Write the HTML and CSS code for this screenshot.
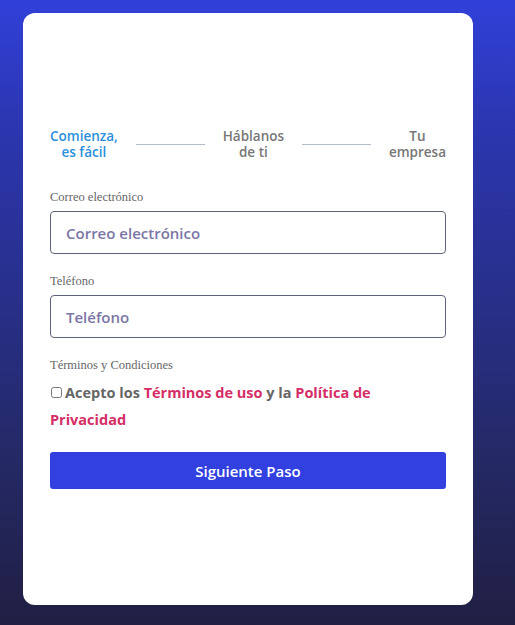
FILE: index.html
```html
<!DOCTYPE html>
<html lang="es">
<head>
    <meta charset="UTF-8">
    <meta name="viewport" content="width=device-width, initial-scale=1.0">
    <title>Registro - Paso 1</title>
    <link rel="stylesheet" href="styles.css">
</head>
<body>
    <form class="card" id="stepForm">
        <div class="steps">
            <div class="step active">Comienza,<br>es fácil</div>
            <div class="step-line"></div>
            <div class="step">Háblanos<br>de ti</div>
            <div class="step-line"></div>
            <div class="step">Tu<br>empresa</div>
        </div>

        <div class="field">
            <label>Correo electrónico</label>
            <input type="email" placeholder="Correo electrónico">
        </div>

        <div class="field">
            <label>Teléfono</label>
            <input type="tel" placeholder="Teléfono">
        </div>

        <div class="field terms">
            <label>Términos y Condiciones</label>
            <p class="terms-text">
                <input type="checkbox" class="check">Acepto los <a href="#">Términos de uso</a> y la <a href="#">Política de</a><br><a href="#">Privacidad</a>
            </p>
        </div>

        <button type="submit" class="next">Siguiente Paso</button>
    </form>
</body>
</html>
```

FILE: styles.css
```css
* {
    margin: 0;
    padding: 0;
    box-sizing: border-box;
}

body {
    height: 625px;
    overflow: hidden;
    background: linear-gradient(180deg, #3140d9 0%, #2b36b0 20%, #252a6a 70%, #201f43 100%);
    font-family: 'Open Sans', 'Noto Sans', sans-serif;
}

.card {
    width: 450px;
    height: 592px;
    margin: 13px 0 0 23px;
    background: #fff;
    border-radius: 12px;
    padding: 115px 27px 0;
}

.steps {
    display: flex;
    align-items: center;
    gap: 18px;
    margin-bottom: 30px;
}

.step {
    font-size: 13.5px;
    font-weight: 600;
    line-height: 16px;
    color: #777;
    text-align: center;
}

.step.active {
    color: #2b8fdc;
}

.step-line {
    flex: 1;
    height: 1px;
    background: #b3bccb;
}

.field {
    margin-bottom: 20px;
}

.field label {
    display: block;
    font-family: 'Liberation Serif', serif;
    font-size: 12.5px;
    color: #666;
    margin-bottom: 6px;
}

.field input[type="email"],
.field input[type="tel"] {
    width: 100%;
    height: 43px;
    border: 1px solid #5d6478;
    border-radius: 4px;
    padding: 0 15px;
    font-family: 'Open Sans', sans-serif;
    font-size: 15px;
    font-weight: 600;
    color: #333;
}

.field input::placeholder {
    color: #7b76a6;
}

.terms-text {
    font-size: 14.5px;
    font-weight: 700;
    line-height: 27px;
    color: #666;
}

.terms-text a {
    color: #d52e66;
    text-decoration: none;
}

.check {
    width: 11px;
    height: 11px;
    margin: 0 3px 0 1px;
    vertical-align: 0;
}

.next {
    display: block;
    width: 100%;
    height: 37px;
    margin-top: -1px;
    border: none;
    border-radius: 3px;
    background: #3140df;
    color: #fff;
    font-family: 'Open Sans', sans-serif;
    font-size: 15px;
    font-weight: 600;
    cursor: pointer;
}
```
